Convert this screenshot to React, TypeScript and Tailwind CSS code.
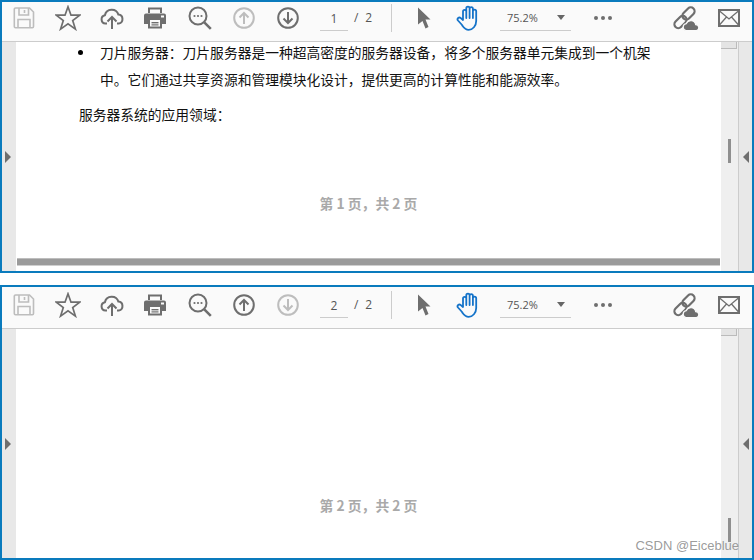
import React from "react";

const GRAY = "#6e6e6e";
const DIM = "#bdbdbd";
// full-width punctuation, as in the document text
const COLON = "\uFF1A";
const COMMA = "\uFF0C";

function SaveIcon() {
  return (
    <svg width="22" height="22" viewBox="0 0 22 22" fill="none" stroke={DIM} strokeWidth="1.6">
      <path d="M2.5 1h14l4 4v14.5a1.2 1.2 0 0 1-1.2 1.2H2.5a1.2 1.2 0 0 1-1.2-1.2V2.2A1.2 1.2 0 0 1 2.5 1z" />
      <path d="M6 1v7h9.5V1M11.5 3v3" />
      <path d="M5 20.5v-8h12v8" />
    </svg>
  );
}

function StarIcon() {
  return (
    <svg width="26" height="26" viewBox="0 0 26 26" fill="none" stroke={GRAY} strokeWidth="1.7" strokeLinejoin="miter">
      <path d="M13 1.8l3 8.4h8.8l-7.1 5.3 2.7 8.6L13 18.9 5.6 24.1l2.7-8.6-7.1-5.3H10z" />
    </svg>
  );
}

function UploadIcon() {
  return (
    <svg width="24" height="24" viewBox="0 0 24 24" fill="none" stroke={GRAY} strokeWidth="2">
      <path d="M7 17.5H5.5a4.2 4.2 0 0 1-.6-8.3 7 7 0 0 1 13.5-.6 4.5 4.5 0 0 1 .4 8.9H17" />
      <path d="M12 23V11.5M7.5 15.5l4.5-4.5 4.500 4.500" />
    </svg>
  );
}

function PrintIcon() {
  return (
    <svg width="22" height="22" viewBox="0 0 22 22" className="-ml-[2px]">
      <path fill={GRAY} d="M4 0.5h14v5.5h-2V2.5H6V6H4z" />
      <path fill={GRAY} fillRule="evenodd" d="M2 6.5h18a2 2 0 0 1 2 2V17h-4v4.5H4V17H0V8.5a2 2 0 0 1 2-2zM6 13v6.5h10V13zM17 8.5v2h3v-2z" />
      <rect x="7.5" y="15" width="7" height="1.4" fill={GRAY} />
      <rect x="7.5" y="17.3" width="7" height="1.2" fill={GRAY} />
    </svg>
  );
}

function SearchIcon() {
  return (
    <svg width="24" height="24" viewBox="0 0 24 24" fill="none" stroke={GRAY}>
      <circle cx="10" cy="10" r="8.5" strokeWidth="2" />
      <path d="M16.3 16.3l6.5 6.5" strokeWidth="2.6" />
      <circle cx="6.5" cy="10" r="1.1" fill={GRAY} stroke="none" />
      <circle cx="10" cy="10" r="1.1" fill={GRAY} stroke="none" />
      <circle cx="13.5" cy="10" r="1.1" fill={GRAY} stroke="none" />
    </svg>
  );
}

function ArrowIcon({ up, enabled }: { up: boolean; enabled: boolean }) {
  const color = enabled ? GRAY : DIM;
  return (
    <svg width="22" height="22" viewBox="0 0 22 22" fill="none" stroke={color} strokeWidth="2">
      <circle cx="11" cy="11" r="9.8" />
      {up ? <path d="M11 17V6M6.5 10.5L11 6l4.5 4.5" /> : <path d="M11 5v11M6.5 11.5L11 16l4.5-4.5" />}
    </svg>
  );
}

function CursorIcon() {
  return (
    <svg width="14" height="22" viewBox="0 0 14 22">
      <path fill={GRAY} d="M1 0.5L13.5 12.5H8.5L11.5 20 8.5 21.5 5.5 14 1 17.5z" />
    </svg>
  );
}

function HandIcon() {
  return (
    <svg width="24" height="26" viewBox="0 0 24 26" fill="none" stroke="#1473c9" strokeWidth="1.8" strokeLinejoin="round" strokeLinecap="round">
      <path d="M6.5 20.5L2 15.5c-1.5-2 1-4 2.8-2.4L7 15V6.5c0-2.200 3.300-2.200 3.300 0V13V3.200c0-2.200 3.300-2.200 3.300 0V13V3.800c0-2.200 3.300-2.200 3.300 0V13V6.300c0-2.200 3.300-2.200 3.300 0V16c0 5-3.500 8.800-7.500 8.800-2.800 0-4.700-1.800-6.500-4.300z" />
    </svg>
  );
}

function LinkCloudIcon() {
  return (
    <svg width="26" height="26" viewBox="0 0 26 26" fill="none">
      <g stroke={GRAY} strokeWidth="2.2">
        <rect x="-7" y="-3.8" width="14" height="7.6" rx="3.8" transform="translate(7.5 17) rotate(-45)" />
        <rect x="-7" y="-3.8" width="14" height="7.6" rx="3.8" transform="translate(15.5 8.5) rotate(-45)" />
      </g>
      <path fill={GRAY} stroke="#fafafa" strokeWidth="1.2" d="M13 25.5a3.5 3.5 0 0 1 .3-6.900 5 5 0 0 1 9.400 1 3 3 0 0 1 .8 5.900z" />
    </svg>
  );
}

function MailIcon() {
  return (
    <svg width="22" height="18" viewBox="0 0 22 18" fill="none" stroke={GRAY}>
      <rect x="1" y="1" width="20" height="16" strokeWidth="2" />
      <path d="M1 1.5l10 8.5 10-8.500M1 16.500l7.500-8.500M21 16.500L13.500 8" strokeWidth="1.3" />
    </svg>
  );
}

function Slot({ children, width = "w-[44px]" }: { children: React.ReactNode; width?: string }) {
  return <div className={`${width} shrink-0 flex items-center justify-center`}>{children}</div>;
}

function Toolbar({ page }: { page: number }) {
  return (
    <div className={`${page === 1 ? "h-[40px] pb-[7px]" : "h-[42px] pb-[5px]"} shrink-0 flex items-center bg-[#fafafa] border-b border-[#cccccc] font-['Open_Sans','Liberation_Sans',sans-serif] text-[#555555]`}>
      <Slot><SaveIcon /></Slot>
      <Slot><StarIcon /></Slot>
      <Slot><UploadIcon /></Slot>
      <Slot><PrintIcon /></Slot>
      <Slot><SearchIcon /></Slot>
      <Slot><ArrowIcon up enabled={page === 2} /></Slot>
      <Slot><ArrowIcon up={false} enabled={page === 1} /></Slot>
      <div className="ml-[10px] w-[28px] h-[26px] shrink-0 border-b border-[#cccccc] flex items-center justify-center text-[12px]">
        <span className="translate-y-[1px]">{page}</span>
      </div>
      <div className="ml-[6px] w-[18px] shrink-0 flex justify-between text-[12px] pb-[1px]">
        <span>/</span>
        <span>2</span>
      </div>
      <div className="ml-[19px] w-px h-[28px] shrink-0 bg-[#cccccc]" />
      <Slot width="w-[32px] ml-[16px]"><CursorIcon /></Slot>
      <Slot width="w-[44px] ml-[6px]"><HandIcon /></Slot>
      <div className="ml-[10px] w-[71px] h-[26px] shrink-0 border-b border-[#cccccc] flex items-center text-[11px]">
        <span className="ml-[7px] translate-y-[1px]">75.2%</span>
        <span className="ml-[19px] w-0 h-0 border-x-[4px] border-x-transparent border-t-[5px] border-t-[#666666]" />
      </div>
      <div className="ml-[23px] shrink-0 flex gap-[3px]">
        <span className="w-[4px] h-[4px] rounded-full bg-[#6e6e6e]" />
        <span className="w-[4px] h-[4px] rounded-full bg-[#6e6e6e]" />
        <span className="w-[4px] h-[4px] rounded-full bg-[#6e6e6e]" />
      </div>
      <Slot width="w-[30px] ml-[59px]"><LinkCloudIcon /></Slot>
      <Slot width="w-[24px] ml-[16px]"><MailIcon /></Slot>
    </div>
  );
}

function Rail({ side }: { side: "left" | "right" }) {
  return (
    <div className={`w-[14px] shrink-0 bg-[#e8e8e8] flex items-center ${side === "left" ? "justify-start pl-[3px]" : "justify-end pr-[3px] border-l border-[#cccccc]"}`}>
      {side === "left" ? (
        <span className="w-0 h-0 border-y-[6px] border-y-transparent border-l-[6px] border-l-[#6e6e6e]" />
      ) : (
        <span className="w-0 h-0 border-y-[6px] border-y-transparent border-r-[6px] border-r-[#6e6e6e]" />
      )}
    </div>
  );
}

function ScrollTrack({ thumb }: { thumb: "top" | "bottom" }) {
  return (
    <div className="w-[17px] shrink-0 bg-[#efefef] flex flex-col items-center">
      <div className="w-[16px] h-[7px] self-start bg-[#e4e4e4] border-r border-b border-[#bbbbbb]" />
      {thumb === "top" ? (
        <div className="w-[3px] h-[24px] mt-[90px] bg-[#8f8f8f]" />
      ) : (
        <div className="w-[3px] h-[24px] mt-auto mb-[16px] bg-[#8f8f8f]" />
      )}
    </div>
  );
}

function PageFooter({ page }: { page: number }) {
  return (
    <div className="text-center text-[13.8px] font-bold text-[#a9a9a9] whitespace-nowrap">
      {`第 ${page} 页${COMMA}共 2 页`}
    </div>
  );
}

export default function App() {
  return (
    <div className="w-[754px] h-[560px] overflow-hidden bg-white flex flex-col font-['Noto_Sans_CJK_SC','Noto_Sans',sans-serif]">
      {/* first pane */}
      <div className="h-[273px] shrink-0 flex flex-col border-2 border-[#0a7bbd]">
        <Toolbar page={1} />
        <div className="flex-1 min-h-0 flex">
          <Rail side="left" />
          <div className="flex-1 min-w-0 flex flex-col bg-white text-[13.78px] leading-[20px] text-[#111111]">
            <div className="flex pl-[62px]">
              <span className="w-[22px] shrink-0 pt-[8px]">
                <span className="block w-[5px] h-[5px] rounded-full bg-black" />
              </span>
              <div className="w-[560px] whitespace-nowrap">
                <div className="h-[27px]">{`刀片服务器${COLON}刀片服务器是一种超高密度的服务器设备${COMMA}将多个服务器单元集成到一个机架`}</div>
                <div>{`中。它们通过共享资源和管理模块化设计${COMMA}提供更高的计算性能和能源效率。`}</div>
              </div>
            </div>
            <div className="pl-[63px] mt-[15px] whitespace-nowrap">{`服务器系统的应用领域${COLON}`}</div>
            <div className="mt-[69px]"><PageFooter page={1} /></div>
            <div className="mt-auto mb-[5px] mx-[1px] h-[8px] bg-[#9b9b9b] border-y border-t-[#bdbdbd] border-b-[#cfcfcf]" />
          </div>
          <ScrollTrack thumb="top" />
          <Rail side="right" />
        </div>
      </div>

      <div className="h-[12px] shrink-0" />

      {/* second pane */}
      <div className="relative flex-1 min-h-0 flex flex-col border-2 border-[#0a7bbd]">
        <Toolbar page={2} />
        <div className="flex-1 min-h-0 flex">
          <Rail side="left" />
          <div className="flex-1 min-w-0 bg-white flex flex-col">
            <div className="mt-[166px]"><PageFooter page={2} /></div>
          </div>
          <ScrollTrack thumb="bottom" />
          <Rail side="right" />
        </div>
        <div className="absolute right-[13px] bottom-[4px] text-[13px] leading-[16px] text-[#8f8f8f]/90 font-['Liberation_Sans',sans-serif] whitespace-nowrap">
          CSDN @Eiceblue
        </div>
      </div>
    </div>
  );
}
